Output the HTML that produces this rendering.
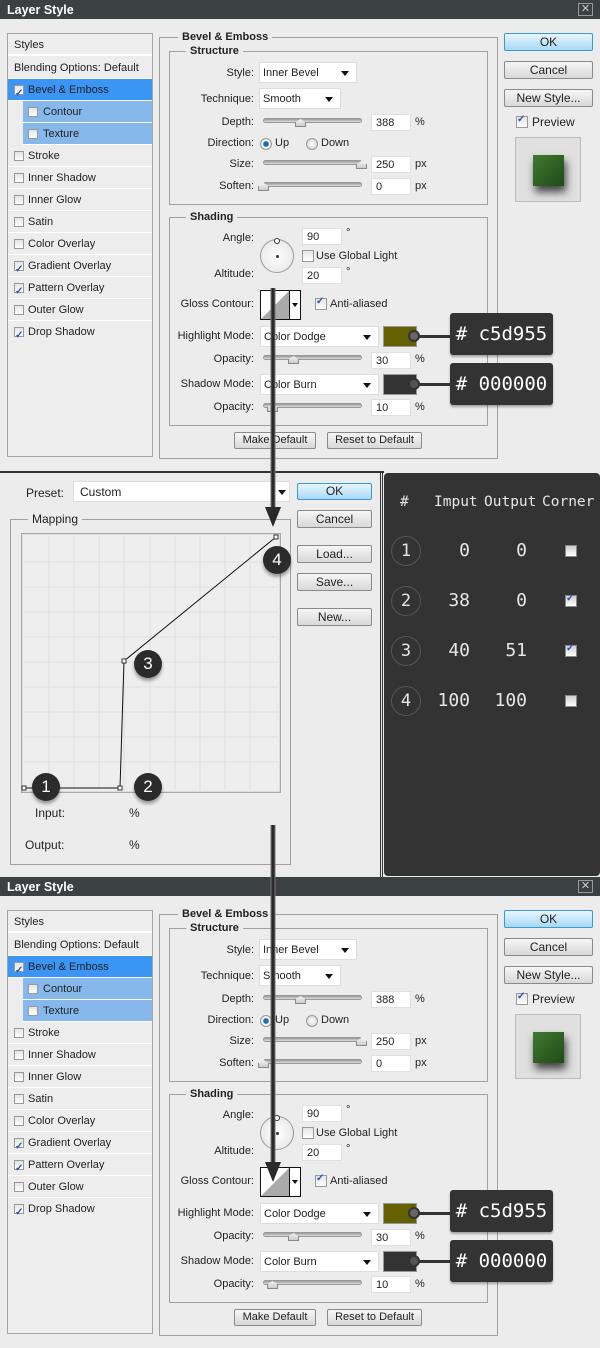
<!DOCTYPE html>
<html><head><meta charset="utf-8"><style>
*{margin:0;padding:0;box-sizing:border-box}
body{width:600px;height:1348px;background:#ececec;font-family:"Liberation Sans",sans-serif;font-size:11px;color:#222;position:relative;overflow:hidden}
.a{position:absolute}
.dlg{position:absolute;left:0;width:600px;height:460px;background:#ececec}
.tb{left:0;top:0;width:600px;height:19px;background:#3b4043;color:#fff;font-weight:bold;font-size:12.5px;padding:3px 0 0 7px}
.cls{right:7px;top:3px;width:15px;height:13px;border:1px solid #999;color:#ccc;font-size:11px;line-height:11px;text-align:center}
.list{left:7px;top:33px;width:146px;height:424px;border:1px solid #a4a4a4;background:#ededed}
.row{position:absolute;left:0;width:144px;height:22px;line-height:22px;padding-left:20px;border-bottom:1px solid #fff}
.cb{position:absolute;width:10px;height:10px;border:1px solid #999;background:linear-gradient(#e4e4e4,#fff)}
.cb.on::after{content:"✓";position:absolute;left:0;top:-3px;font-size:10px;color:#2a4fb0;font-weight:bold}
.fs{border:1px solid #a0a0a0}
.lg{position:absolute;background:#ececec;font-weight:bold;padding:0 4px;top:-7px}
.lb{position:absolute;text-align:right;width:110px}
.in{position:absolute;background:#fff;border:1px solid #e0e0e0;height:17px;line-height:16px;padding-left:4px}
.sel{position:absolute;background:#fff;border:1px solid #ddd;height:21px;line-height:20px;padding-left:3px}
.sel::after{content:"";position:absolute;right:7px;top:8px;border:4px solid transparent;border-top:5px solid #111}
.tr{position:absolute;left:263px;width:99px;height:5px;border-radius:3px;background:linear-gradient(#999,#ddd);border:1px solid #999}
.th{position:absolute;width:11px;height:8px;background:linear-gradient(#f4f4f4,#ccc);border:1px solid #888;border-top:none;clip-path:polygon(50% 0,100% 40%,100% 100%,0 100%,0 40%)}
.btn{position:absolute;border:1px solid #8a8a8a;border-radius:2px;background:linear-gradient(#f6f6f6,#d8d8d8);text-align:center;font-size:12px}
.call{position:absolute;left:450px;width:103px;height:42px;background:#333;border-radius:3px;color:#fff;font-family:"DejaVu Sans Mono",monospace;font-size:19px;line-height:42px;text-align:center;box-shadow:0 2px 2px rgba(0,0,0,.3)}
.rad{position:absolute;width:12px;height:12px;border-radius:50%;border:1px solid #999;background:radial-gradient(#fff,#ccc)}
.badge{position:absolute;width:28px;height:28px;border-radius:50%;background:#2b2b2b;color:#fff;font-size:17px;text-align:center;line-height:28px;box-shadow:0 3px 3px rgba(0,0,0,.35)}
.mono{font-family:"DejaVu Sans Mono",monospace;color:#e6e6e6}
.circ{position:absolute;left:391px;width:30px;height:30px;border-radius:50%;border:1px solid #555;text-align:center;line-height:28px;font-size:17px}
.rc{position:absolute;left:565px;width:12px;height:12px;background:linear-gradient(#ccc,#fff);border:1px solid #888}
</style></head><body>

<!-- TOP DIALOG -->
<div class="dlg" style="top:0">
<div class="a tb">Layer Style</div><div class="a cls">✕</div>
<div class="a list">
 <div class="row" style="top:0;padding-left:6px;border-bottom:2px solid #fff">Styles</div>
 <div class="row" style="top:23px;padding-left:6px">Blending Options: Default</div>
 <div class="row" style="top:45px;background:#3a95f5"><span class="cb on" style="left:6px;top:6px"></span>Bevel &amp; Emboss</div>
 <div class="row" style="top:67px;left:15px;width:129px;background:#86b8ec;padding-left:20px"><span class="cb" style="left:5px;top:6px"></span>Contour</div>
 <div class="row" style="top:89px;left:15px;width:129px;background:#86b8ec;padding-left:20px"><span class="cb" style="left:5px;top:6px"></span>Texture</div>
 <div class="row" style="top:111px"><span class="cb" style="left:6px;top:6px"></span>Stroke</div>
 <div class="row" style="top:133px"><span class="cb" style="left:6px;top:6px"></span>Inner Shadow</div>
 <div class="row" style="top:155px"><span class="cb" style="left:6px;top:6px"></span>Inner Glow</div>
 <div class="row" style="top:177px"><span class="cb" style="left:6px;top:6px"></span>Satin</div>
 <div class="row" style="top:199px"><span class="cb" style="left:6px;top:6px"></span>Color Overlay</div>
 <div class="row" style="top:221px"><span class="cb on" style="left:6px;top:6px"></span>Gradient Overlay</div>
 <div class="row" style="top:243px"><span class="cb on" style="left:6px;top:6px"></span>Pattern Overlay</div>
 <div class="row" style="top:265px"><span class="cb" style="left:6px;top:6px"></span>Outer Glow</div>
 <div class="row" style="top:287px;border:none"><span class="cb on" style="left:6px;top:6px"></span>Drop Shadow</div>
</div>
<div class="a fs" style="left:159px;top:37px;width:339px;height:422px"><span class="lg" style="left:18px">Bevel &amp; Emboss</span></div>
<div class="a fs" style="left:169px;top:51px;width:319px;height:154px"><span class="lg" style="left:16px">Structure</span></div>
<div class="lb" style="left:144px;top:67px">Style:</div><div class="sel" style="left:259px;top:62px;width:98px">Inner Bevel</div>
<div class="lb" style="left:144px;top:93px">Technique:</div><div class="sel" style="left:259px;top:88px;width:82px">Smooth</div>
<div class="lb" style="left:144px;top:116px">Depth:</div><div class="tr" style="top:118px"></div><div class="th" style="left:295px;top:119px"></div><div class="in" style="left:371px;top:114px;width:40px">388</div><div class="a" style="left:415px;top:116px">%</div>
<div class="lb" style="left:144px;top:137px">Direction:</div><div class="rad" style="left:260px;top:138px;background:radial-gradient(#1a6fb0 35%,#fff 45%,#ccc)"></div><div class="a" style="left:275px;top:137px">Up</div><div class="rad" style="left:306px;top:138px"></div><div class="a" style="left:321px;top:137px">Down</div>
<div class="lb" style="left:144px;top:158px">Size:</div><div class="tr" style="top:160px"></div><div class="th" style="left:356px;top:161px"></div><div class="in" style="left:371px;top:156px;width:40px">250</div><div class="a" style="left:415px;top:158px">px</div>
<div class="lb" style="left:144px;top:180px">Soften:</div><div class="tr" style="top:182px"></div><div class="th" style="left:258px;top:183px"></div><div class="in" style="left:371px;top:178px;width:40px">0</div><div class="a" style="left:415px;top:180px">px</div>
<div class="a fs" style="left:169px;top:217px;width:319px;height:209px"><span class="lg" style="left:16px">Shading</span></div>
<div class="lb" style="left:144px;top:232px">Angle:</div>
<div class="a" style="left:260px;top:239px;width:34px;height:34px;border-radius:50%;border:1px solid #999;background:radial-gradient(#fff,#e2e2e2)"><div class="a" style="left:15px;top:15px;width:3px;height:3px;background:#333;border-radius:50%"></div><div class="a" style="left:13px;top:-2px;width:6px;height:6px;background:#fff;border:1px solid #333;border-radius:50%"></div></div>
<div class="in" style="left:302px;top:228px;width:40px">90</div><div class="a" style="left:346px;top:227px">°</div>
<div class="cb" style="left:302px;top:250px;width:12px;height:12px"></div><div class="a" style="left:316px;top:250px">Use Global Light</div>
<div class="lb" style="left:144px;top:268px">Altitude:</div><div class="in" style="left:302px;top:267px;width:40px">20</div><div class="a" style="left:346px;top:266px">°</div>
<div class="lb" style="left:144px;top:298px">Gloss Contour:</div>
<div class="a" style="left:260px;top:290px;width:41px;height:30px;border:1px solid #111;background:#fff"><svg class="a" style="left:0;top:0" width="28" height="28"><polygon points="0,28 28,0 28,28" fill="#aaa"/></svg><div class="a" style="left:28px;top:0;width:1px;height:28px;background:#111"></div><div class="a" style="left:31px;top:12px;border:3px solid transparent;border-top:4px solid #111"></div></div>
<div class="cb on" style="left:315px;top:298px;width:12px;height:12px"></div><div class="a" style="left:330px;top:298px">Anti-aliased</div>
<div class="lb" style="left:144px;top:330px">Highlight Mode:</div><div class="sel" style="left:260px;top:326px;width:119px">Color Dodge</div><div class="a" style="left:383px;top:326px;width:34px;height:21px;background:#656100;border:1px solid #999"></div>
<div class="lb" style="left:144px;top:353px">Opacity:</div><div class="tr" style="top:355px"></div><div class="th" style="left:288px;top:356px"></div><div class="in" style="left:371px;top:352px;width:40px">30</div><div class="a" style="left:415px;top:353px">%</div>
<div class="lb" style="left:144px;top:378px">Shadow Mode:</div><div class="sel" style="left:260px;top:374px;width:119px">Color Burn</div><div class="a" style="left:383px;top:374px;width:34px;height:21px;background:#333;border:1px solid #999"></div>
<div class="lb" style="left:144px;top:401px">Opacity:</div><div class="tr" style="top:403px"></div><div class="th" style="left:267px;top:404px"></div><div class="in" style="left:371px;top:399px;width:40px">10</div><div class="a" style="left:415px;top:401px">%</div>
<div class="a" style="left:414px;top:335px;width:36px;height:3px;background:#333"></div><div class="a" style="left:408px;top:330px;width:12px;height:12px;border-radius:50%;border:2px solid #333;background:#666"></div>
<div class="a" style="left:414px;top:383px;width:36px;height:3px;background:#333"></div><div class="a" style="left:408px;top:378px;width:12px;height:12px;border-radius:50%;border:2px solid #333;background:#555"></div>
<div class="call" style="top:313px"># c5d955</div><div class="call" style="top:363px"># 000000</div>
<div class="btn" style="left:234px;top:432px;width:82px;height:17px;font-size:11px;line-height:15px">Make Default</div>
<div class="btn" style="left:327px;top:432px;width:95px;height:17px;font-size:11px;line-height:15px">Reset to Default</div>
<div class="btn" style="left:504px;top:33px;width:89px;height:18px;line-height:16px;background:linear-gradient(#e8f6ff,#a8d8f6);border-color:#3a9ad8">OK</div>
<div class="btn" style="left:504px;top:61px;width:89px;height:18px;line-height:16px">Cancel</div>
<div class="btn" style="left:504px;top:89px;width:89px;height:18px;line-height:16px">New Style...</div>
<div class="cb on" style="left:516px;top:116px;width:12px;height:12px"></div><div class="a" style="left:532px;top:115px;font-size:12px">Preview</div>
<div class="a" style="left:515px;top:137px;width:66px;height:65px;border:1px solid #bbb;background:#e0e0e0"><div class="a" style="left:17px;top:17px;width:31px;height:31px;background:linear-gradient(135deg,#3f7a2e,#1f4a18);box-shadow:2px 6px 8px rgba(0,0,0,.7)"></div></div>
</div>

<!-- MIDDLE -->
<div class="a" style="left:0;top:471px;width:384px;height:2px;background:#333"></div>
<div class="a" style="left:380px;top:471px;width:3px;height:406px;border-left:1px solid #333;border-right:1px solid #333"></div>
<div class="a" style="left:26px;top:486px;font-size:12px">Preset:</div>
<div class="a" style="left:73px;top:481px;width:217px;height:21px;background:#fff;border:1px solid #ddd;font-size:12px;padding:3px 0 0 6px">Custom</div>
<div class="a" style="left:278px;top:490px;border:4px solid transparent;border-top:5px solid #111"></div>
<div class="btn" style="left:297px;top:483px;width:75px;height:17px;line-height:15px;background:linear-gradient(#e8f6ff,#a8d8f6);border-color:#3a9ad8">OK</div>
<div class="btn" style="left:297px;top:510px;width:75px;height:18px;line-height:16px">Cancel</div>
<div class="btn" style="left:297px;top:545px;width:75px;height:18px;line-height:16px">Load...</div>
<div class="btn" style="left:297px;top:573px;width:75px;height:18px;line-height:16px">Save...</div>
<div class="btn" style="left:297px;top:608px;width:75px;height:18px;line-height:16px">New...</div>
<div class="a fs" style="left:10px;top:519px;width:281px;height:346px"><span class="lg" style="left:17px;font-weight:normal;font-size:12px;top:-8px">Mapping</span></div>
<svg class="a" style="left:21px;top:533px" width="260" height="260">
<rect x="0.5" y="0.5" width="259" height="259" fill="#eee" stroke="#aaa" stroke-width="1.5"/>
<g stroke="#dedede" stroke-width="1">
<path d="M28 3V257M53 3V257M78 3V257M103 3V257M129 3V257M154 3V257M179 3V257M204 3V257M229 3V257M3 29H257M3 54H257M3 79H257M3 104H257M3 129H257M3 154H257M3 179H257M3 204H257M3 229H257"/></g>
<polyline points="3,255 99,255 103,128 255,4" fill="none" stroke="#111" stroke-width="1"/>
<g fill="#fff" stroke="#333"><rect x="1" y="253" width="4" height="4"/><rect x="97" y="253" width="4" height="4"/><rect x="101" y="126" width="4" height="4"/><rect x="253" y="2" width="4" height="4"/></g>
</svg>
<div class="badge" style="left:32px;top:773px">1</div>
<div class="badge" style="left:134px;top:773px">2</div>
<div class="badge" style="left:134px;top:650px">3</div>
<div class="badge" style="left:263px;top:546px">4</div>
<div class="a" style="left:35px;top:806px;font-size:12px">Input:</div><div class="a" style="left:129px;top:806px;font-size:12px">%</div>
<div class="a" style="left:25px;top:838px;font-size:12px">Output:</div><div class="a" style="left:129px;top:838px;font-size:12px">%</div>

<div class="a mono" style="left:384px;top:473px;width:216px;height:403px;background:#333;border-radius:4px"></div>
<div class="a mono" style="left:400px;top:494px;font-size:14.5px">#</div>
<div class="a mono" style="left:434px;top:494px;font-size:14.5px">Imput</div>
<div class="a mono" style="left:484px;top:494px;font-size:14.5px">Output</div>
<div class="a mono" style="left:542px;top:494px;font-size:14.5px">Corner</div>
<div class="circ mono" style="top:536px">1</div><div class="a mono" style="left:430px;top:540px;width:40px;text-align:right;font-size:18px">0</div><div class="a mono" style="left:487px;top:540px;width:40px;text-align:right;font-size:18px">0</div><div class="rc" style="top:545px"></div>
<div class="circ mono" style="top:586px">2</div><div class="a mono" style="left:430px;top:590px;width:40px;text-align:right;font-size:18px">38</div><div class="a mono" style="left:487px;top:590px;width:40px;text-align:right;font-size:18px">0</div><div class="rc cb on" style="top:595px;left:565px;width:12px;height:12px"></div>
<div class="circ mono" style="top:636px">3</div><div class="a mono" style="left:430px;top:640px;width:40px;text-align:right;font-size:18px">40</div><div class="a mono" style="left:487px;top:640px;width:40px;text-align:right;font-size:18px">51</div><div class="rc cb on" style="top:645px;left:565px;width:12px;height:12px"></div>
<div class="circ mono" style="top:686px">4</div><div class="a mono" style="left:430px;top:690px;width:40px;text-align:right;font-size:18px">100</div><div class="a mono" style="left:487px;top:690px;width:40px;text-align:right;font-size:18px">100</div><div class="rc" style="top:695px"></div>

<!-- BOTTOM DIALOG -->
<div class="dlg" style="top:877px">
<div class="a tb">Layer Style</div><div class="a cls">✕</div>
<div class="a list">
 <div class="row" style="top:0;padding-left:6px;border-bottom:2px solid #fff">Styles</div>
 <div class="row" style="top:23px;padding-left:6px">Blending Options: Default</div>
 <div class="row" style="top:45px;background:#3a95f5"><span class="cb on" style="left:6px;top:6px"></span>Bevel &amp; Emboss</div>
 <div class="row" style="top:67px;left:15px;width:129px;background:#86b8ec;padding-left:20px"><span class="cb" style="left:5px;top:6px"></span>Contour</div>
 <div class="row" style="top:89px;left:15px;width:129px;background:#86b8ec;padding-left:20px"><span class="cb" style="left:5px;top:6px"></span>Texture</div>
 <div class="row" style="top:111px"><span class="cb" style="left:6px;top:6px"></span>Stroke</div>
 <div class="row" style="top:133px"><span class="cb" style="left:6px;top:6px"></span>Inner Shadow</div>
 <div class="row" style="top:155px"><span class="cb" style="left:6px;top:6px"></span>Inner Glow</div>
 <div class="row" style="top:177px"><span class="cb" style="left:6px;top:6px"></span>Satin</div>
 <div class="row" style="top:199px"><span class="cb" style="left:6px;top:6px"></span>Color Overlay</div>
 <div class="row" style="top:221px"><span class="cb on" style="left:6px;top:6px"></span>Gradient Overlay</div>
 <div class="row" style="top:243px"><span class="cb on" style="left:6px;top:6px"></span>Pattern Overlay</div>
 <div class="row" style="top:265px"><span class="cb" style="left:6px;top:6px"></span>Outer Glow</div>
 <div class="row" style="top:287px;border:none"><span class="cb on" style="left:6px;top:6px"></span>Drop Shadow</div>
</div>
<div class="a fs" style="left:159px;top:37px;width:339px;height:422px"><span class="lg" style="left:18px">Bevel &amp; Emboss</span></div>
<div class="a fs" style="left:169px;top:51px;width:319px;height:154px"><span class="lg" style="left:16px">Structure</span></div>
<div class="lb" style="left:144px;top:67px">Style:</div><div class="sel" style="left:259px;top:62px;width:98px">Inner Bevel</div>
<div class="lb" style="left:144px;top:93px">Technique:</div><div class="sel" style="left:259px;top:88px;width:82px">Smooth</div>
<div class="lb" style="left:144px;top:116px">Depth:</div><div class="tr" style="top:118px"></div><div class="th" style="left:295px;top:119px"></div><div class="in" style="left:371px;top:114px;width:40px">388</div><div class="a" style="left:415px;top:116px">%</div>
<div class="lb" style="left:144px;top:137px">Direction:</div><div class="rad" style="left:260px;top:138px;background:radial-gradient(#1a6fb0 35%,#fff 45%,#ccc)"></div><div class="a" style="left:275px;top:137px">Up</div><div class="rad" style="left:306px;top:138px"></div><div class="a" style="left:321px;top:137px">Down</div>
<div class="lb" style="left:144px;top:158px">Size:</div><div class="tr" style="top:160px"></div><div class="th" style="left:356px;top:161px"></div><div class="in" style="left:371px;top:156px;width:40px">250</div><div class="a" style="left:415px;top:158px">px</div>
<div class="lb" style="left:144px;top:180px">Soften:</div><div class="tr" style="top:182px"></div><div class="th" style="left:258px;top:183px"></div><div class="in" style="left:371px;top:178px;width:40px">0</div><div class="a" style="left:415px;top:180px">px</div>
<div class="a fs" style="left:169px;top:217px;width:319px;height:209px"><span class="lg" style="left:16px">Shading</span></div>
<div class="lb" style="left:144px;top:232px">Angle:</div>
<div class="a" style="left:260px;top:239px;width:34px;height:34px;border-radius:50%;border:1px solid #999;background:radial-gradient(#fff,#e2e2e2)"><div class="a" style="left:15px;top:15px;width:3px;height:3px;background:#333;border-radius:50%"></div><div class="a" style="left:13px;top:-2px;width:6px;height:6px;background:#fff;border:1px solid #333;border-radius:50%"></div></div>
<div class="in" style="left:302px;top:228px;width:40px">90</div><div class="a" style="left:346px;top:227px">°</div>
<div class="cb" style="left:302px;top:250px;width:12px;height:12px"></div><div class="a" style="left:316px;top:250px">Use Global Light</div>
<div class="lb" style="left:144px;top:268px">Altitude:</div><div class="in" style="left:302px;top:267px;width:40px">20</div><div class="a" style="left:346px;top:266px">°</div>
<div class="lb" style="left:144px;top:298px">Gloss Contour:</div>
<div class="a" style="left:260px;top:290px;width:41px;height:30px;border:1px solid #111;background:#fff"><svg class="a" style="left:0;top:0" width="28" height="28"><polygon points="0,28 28,0 28,28" fill="#aaa"/></svg><div class="a" style="left:28px;top:0;width:1px;height:28px;background:#111"></div><div class="a" style="left:31px;top:12px;border:3px solid transparent;border-top:4px solid #111"></div></div>
<div class="cb on" style="left:315px;top:298px;width:12px;height:12px"></div><div class="a" style="left:330px;top:298px">Anti-aliased</div>
<div class="lb" style="left:144px;top:330px">Highlight Mode:</div><div class="sel" style="left:260px;top:326px;width:119px">Color Dodge</div><div class="a" style="left:383px;top:326px;width:34px;height:21px;background:#656100;border:1px solid #999"></div>
<div class="lb" style="left:144px;top:353px">Opacity:</div><div class="tr" style="top:355px"></div><div class="th" style="left:288px;top:356px"></div><div class="in" style="left:371px;top:352px;width:40px">30</div><div class="a" style="left:415px;top:353px">%</div>
<div class="lb" style="left:144px;top:378px">Shadow Mode:</div><div class="sel" style="left:260px;top:374px;width:119px">Color Burn</div><div class="a" style="left:383px;top:374px;width:34px;height:21px;background:#333;border:1px solid #999"></div>
<div class="lb" style="left:144px;top:401px">Opacity:</div><div class="tr" style="top:403px"></div><div class="th" style="left:267px;top:404px"></div><div class="in" style="left:371px;top:399px;width:40px">10</div><div class="a" style="left:415px;top:401px">%</div>
<div class="a" style="left:414px;top:335px;width:36px;height:3px;background:#333"></div><div class="a" style="left:408px;top:330px;width:12px;height:12px;border-radius:50%;border:2px solid #333;background:#666"></div>
<div class="a" style="left:414px;top:383px;width:36px;height:3px;background:#333"></div><div class="a" style="left:408px;top:378px;width:12px;height:12px;border-radius:50%;border:2px solid #333;background:#555"></div>
<div class="call" style="top:313px"># c5d955</div><div class="call" style="top:363px"># 000000</div>
<div class="btn" style="left:234px;top:432px;width:82px;height:17px;font-size:11px;line-height:15px">Make Default</div>
<div class="btn" style="left:327px;top:432px;width:95px;height:17px;font-size:11px;line-height:15px">Reset to Default</div>
<div class="btn" style="left:504px;top:33px;width:89px;height:18px;line-height:16px;background:linear-gradient(#e8f6ff,#a8d8f6);border-color:#3a9ad8">OK</div>
<div class="btn" style="left:504px;top:61px;width:89px;height:18px;line-height:16px">Cancel</div>
<div class="btn" style="left:504px;top:89px;width:89px;height:18px;line-height:16px">New Style...</div>
<div class="cb on" style="left:516px;top:116px;width:12px;height:12px"></div><div class="a" style="left:532px;top:115px;font-size:12px">Preview</div>
<div class="a" style="left:515px;top:137px;width:66px;height:65px;border:1px solid #bbb;background:#e0e0e0"><div class="a" style="left:17px;top:17px;width:31px;height:31px;background:linear-gradient(135deg,#3f7a2e,#1f4a18);box-shadow:2px 6px 8px rgba(0,0,0,.7)"></div></div>
</div>

<!-- ARROWS -->
<svg class="a" style="left:0;top:0" width="600" height="1348">
<g stroke="#777" stroke-width="5"><line x1="273" y1="288" x2="273" y2="510"/><line x1="273" y1="825" x2="273" y2="1165"/></g>
<g stroke="#2a2a2a" stroke-width="3"><line x1="273" y1="288" x2="273" y2="512"/><line x1="273" y1="825" x2="273" y2="1167"/></g>
<polygon points="265,507 281,507 273,527" fill="#2a2a2a"/>
<polygon points="265,1162 281,1162 273,1182" fill="#2a2a2a"/>
</svg>
</body></html>
